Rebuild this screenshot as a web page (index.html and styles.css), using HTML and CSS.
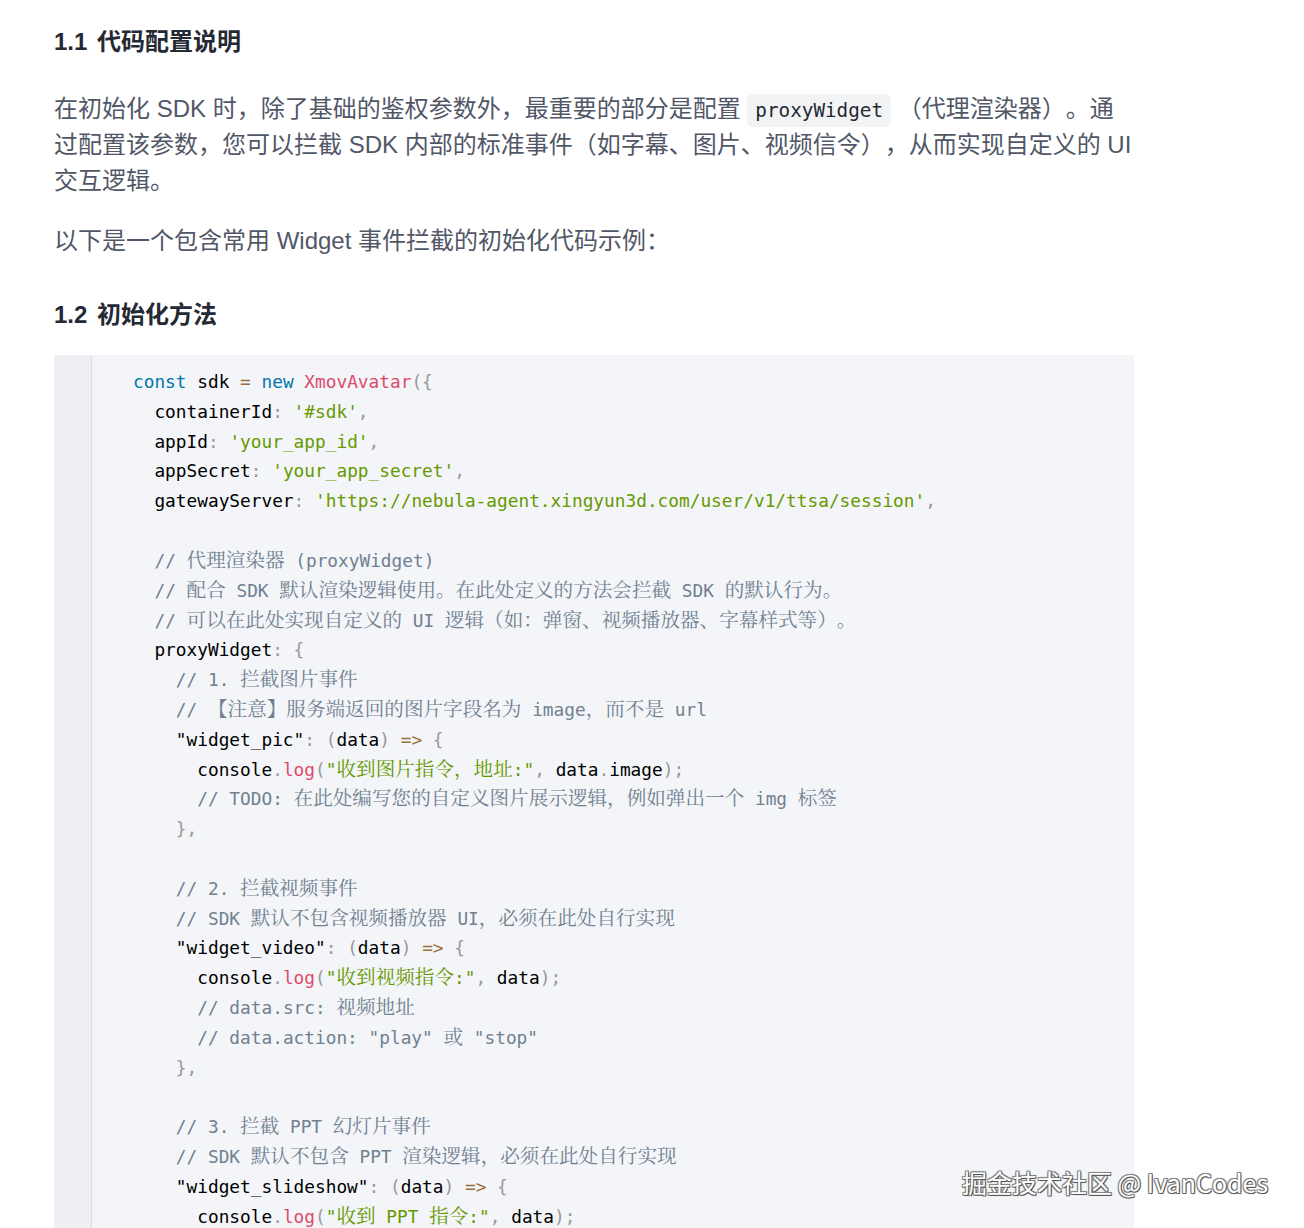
FILE: index.html
```html
<!DOCTYPE html>
<html lang="zh-CN">
<head>
<meta charset="utf-8">
<title>1.1 代码配置说明</title>
<link rel="stylesheet" href="styles.css">
</head>
<body>
<main class="article">
  <h3 class="h3">1.1 代码配置说明</h3>
  <p class="para">在初始化 SDK 时，除了基础的鉴权参数外，最重要的部分是配置 <code class="inline-code">proxyWidget</code> （代理渲染器）。通过配置该参数，您可以拦截 SDK 内部的标准事件（如字幕、图片、视频信令），从而实现自定义的 UI 交互逻辑。</p>
  <p class="para">以下是一个包含常用 Widget 事件拦截的初始化代码示例：</p>
  <h3 class="h3 h3-second">1.2 初始化方法</h3>
  <div class="code-block">
    <div class="gutter"></div>
<pre class="code"><span class="k">const</span> sdk <span class="o">=</span> <span class="k">new</span> <span class="f">XmovAvatar</span><span class="p">({</span>
  containerId<span class="p">:</span> <span class="s">'#sdk'</span><span class="p">,</span>
  appId<span class="p">:</span> <span class="s">'your_app_id'</span><span class="p">,</span>
  appSecret<span class="p">:</span> <span class="s">'your_app_secret'</span><span class="p">,</span>
  gatewayServer<span class="p">:</span> <span class="s">'https://nebula-agent.xingyun3d.com/user/v1/ttsa/session'</span><span class="p">,</span>

  <span class="c">// <span class="z">代理渲染器</span> (proxyWidget)</span>
  <span class="c">// <span class="z">配合</span> SDK <span class="z">默认渲染逻辑使用。在此处定义的方法会拦截</span> SDK <span class="z">的默认行为。</span></span>
  <span class="c">// <span class="z">可以在此处实现自定义的</span> UI <span class="z">逻辑（如：弹窗、视频播放器、字幕样式等）。</span></span>
  proxyWidget<span class="p">:</span> <span class="p">{</span>
    <span class="c">// 1. <span class="z">拦截图片事件</span></span>
    <span class="c">// <span class="z">【注意】服务端返回的图片字段名为</span> image<span class="z">，而不是</span> url</span>
    "widget_pic"<span class="p">:</span> <span class="p">(</span>data<span class="p">)</span> <span class="o">=&gt;</span> <span class="p">{</span>
      console<span class="p">.</span><span class="f">log</span><span class="p">(</span><span class="s">"<span class="z">收到图片指令，地址</span>:"</span><span class="p">,</span> data<span class="p">.</span>image<span class="p">);</span>
      <span class="c">// TODO: <span class="z">在此处编写您的自定义图片展示逻辑，例如弹出一个</span> img <span class="z">标签</span></span>
    <span class="p">},</span>

    <span class="c">// 2. <span class="z">拦截视频事件</span></span>
    <span class="c">// SDK <span class="z">默认不包含视频播放器</span> UI<span class="z">，必须在此处自行实现</span></span>
    "widget_video"<span class="p">:</span> <span class="p">(</span>data<span class="p">)</span> <span class="o">=&gt;</span> <span class="p">{</span>
      console<span class="p">.</span><span class="f">log</span><span class="p">(</span><span class="s">"<span class="z">收到视频指令</span>:"</span><span class="p">,</span> data<span class="p">);</span>
      <span class="c">// data.src: <span class="z">视频地址</span></span>
      <span class="c">// data.action: "play" <span class="z">或</span> "stop"</span>
    <span class="p">},</span>

    <span class="c">// 3. <span class="z">拦截</span> PPT <span class="z">幻灯片事件</span></span>
    <span class="c">// SDK <span class="z">默认不包含</span> PPT <span class="z">渲染逻辑，必须在此处自行实现</span></span>
    "widget_slideshow"<span class="p">:</span> <span class="p">(</span>data<span class="p">)</span> <span class="o">=&gt;</span> <span class="p">{</span>
      console<span class="p">.</span><span class="f">log</span><span class="p">(</span><span class="s">"<span class="z">收到</span> PPT <span class="z">指令</span>:"</span><span class="p">,</span> data<span class="p">);</span>
      <span class="c">// TODO: <span class="z">渲染幻灯片</span></span>
    <span class="p">}</span>
  <span class="p">}</span>
<span class="p">});</span></pre>
  </div>
</main>
<div class="watermark">掘金技术社区 @ IvanCodes</div>
</body>
</html>
```

FILE: styles.css
```css
html, body {
  margin: 0;
  padding: 0;
  background: #ffffff;
}

body {
  font-family: "Liberation Sans", "Noto Sans CJK SC", sans-serif;
  color: #515767;
  overflow: hidden;
  height: 1228px;
  position: relative;
  text-spacing-trim: space-all;
}

.article {
  width: 1080px;
  padding: 24px 0 0 54px;
}

.h3 {
  margin: 0;
  font-size: 24px;
  line-height: 36px;
  font-weight: 700;
  color: #252933;
  word-spacing: 3px;
}

.h3-second {
  margin-top: 38px;
  margin-bottom: 22px;
}

.para {
  margin: 31px 0 0;
  font-size: 24px;
  line-height: 36px;
  color: #515767;
}

.para + .para {
  margin-top: 24px;
}

.inline-code {
  font-family: "DejaVu Sans Mono", "Liberation Mono", monospace;
  font-size: 19.3px;
  line-height: 0;
  color: #252933;
  background: #f2f3f5;
  border-radius: 6px;
  padding: 5px 8px;
}

.code-block {
  display: flex;
  background: #f3f5f8;
}

.gutter {
  width: 37px;
  flex: none;
  background: #eeeff2;
  border-right: 1px solid #d9dbe0;
}

.code {
  margin: 0;
  padding: 12px 0 20px 41px;
  font-family: "DejaVu Sans Mono", "Liberation Mono", monospace;
  font-size: 17.8px;
  line-height: 29.82px;
  color: #000000;
  white-space: pre;
  text-spacing-trim: space-all;
}

.code .z {
  font-family: "Noto Serif CJK SC", "Noto Sans CJK SC", serif;
  font-size: 19.6px;
  line-height: 0;
}

.k { color: #0077aa; }
.f { color: #dd4a68; }
.p { color: #999999; }
.s { color: #669900; }
.c { color: #708090; }
.o { color: #9a6e3a; }

.watermark {
  position: absolute;
  left: 962px;
  top: 1164px;
  font-family: "Noto Sans CJK SC", "Noto Sans", sans-serif;
  font-size: 25px;
  line-height: 36px;
  color: #ffffff;
  white-space: nowrap;
  text-shadow: 1px 1px 0 #555, -1px -1px 0 #888, 1px -1px 0 #777, -1px 1px 0 #777, 0 0 2px #444;
}
```
